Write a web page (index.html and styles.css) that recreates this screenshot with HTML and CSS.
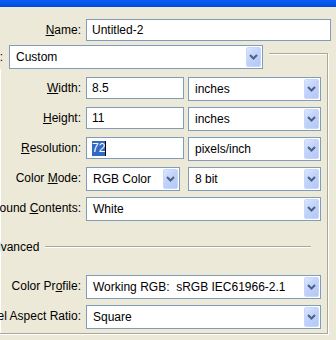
FILE: index.html
```html
<!DOCTYPE html>
<html>
<head>
<meta charset="utf-8">
<link rel="stylesheet" href="styles.css">
</head>
<body>
<div class="titlebar"></div>

<div class="row name-row">
  <div class="label"><span><u>N</u>ame:</span></div>
  <div class="text grow">Untitled-2</div>
</div>

<div class="group">
  <div class="legend">
    <div class="label legend-label"><span>Pr<u>e</u>set:</span></div>
    <div class="select preset"><span class="val">Custom</span><span class="btn"><svg width="9" height="6" viewBox="0 0 9 6"><path d="M1 1L4.5 4.5L8 1" fill="none" stroke="#4d6185" stroke-width="2"/></svg></span></div>
  </div>

  <div class="row first">
    <div class="label"><span><u>W</u>idth:</span></div>
    <div class="text num">8.5</div>
    <div class="select unit"><span class="val">inches</span><span class="btn"><svg width="9" height="6" viewBox="0 0 9 6"><path d="M1 1L4.5 4.5L8 1" fill="none" stroke="#4d6185" stroke-width="2"/></svg></span></div>
  </div>

  <div class="row">
    <div class="label"><span><u>H</u>eight:</span></div>
    <div class="text num">11</div>
    <div class="select unit"><span class="val">inches</span><span class="btn"><svg width="9" height="6" viewBox="0 0 9 6"><path d="M1 1L4.5 4.5L8 1" fill="none" stroke="#4d6185" stroke-width="2"/></svg></span></div>
  </div>

  <div class="row">
    <div class="label"><span><u>R</u>esolution:</span></div>
    <div class="text num"><span class="sel">72</span><span class="caret"></span></div>
    <div class="select unit"><span class="val">pixels/inch</span><span class="btn"><svg width="9" height="6" viewBox="0 0 9 6"><path d="M1 1L4.5 4.5L8 1" fill="none" stroke="#4d6185" stroke-width="2"/></svg></span></div>
  </div>

  <div class="row">
    <div class="label"><span>Color <u>M</u>ode:</span></div>
    <div class="select mode"><span class="val">RGB Color</span><span class="btn"><svg width="9" height="6" viewBox="0 0 9 6"><path d="M1 1L4.5 4.5L8 1" fill="none" stroke="#4d6185" stroke-width="2"/></svg></span></div>
    <div class="select unit"><span class="val">8 bit</span><span class="btn"><svg width="9" height="6" viewBox="0 0 9 6"><path d="M1 1L4.5 4.5L8 1" fill="none" stroke="#4d6185" stroke-width="2"/></svg></span></div>
  </div>

  <div class="row">
    <div class="label"><span>Background <u>C</u>ontents:</span></div>
    <div class="select full"><span class="val">White</span><span class="btn"><svg width="9" height="6" viewBox="0 0 9 6"><path d="M1 1L4.5 4.5L8 1" fill="none" stroke="#4d6185" stroke-width="2"/></svg></span></div>
  </div>

  <div class="advanced">
    <span class="adv-text">Advanced</span>
    <span class="adv-line"></span>
  </div>

  <div class="row profile">
    <div class="label"><span>Color Pr<u>o</u>file:</span></div>
    <div class="select full"><span class="val">Working RGB:&nbsp; sRGB IEC61966-2.1</span><span class="btn"><svg width="9" height="6" viewBox="0 0 9 6"><path d="M1 1L4.5 4.5L8 1" fill="none" stroke="#4d6185" stroke-width="2"/></svg></span></div>
  </div>

  <div class="row">
    <div class="label"><span>Pixel Aspect Ratio:</span></div>
    <div class="select full"><span class="val">Square</span><span class="btn"><svg width="9" height="6" viewBox="0 0 9 6"><path d="M1 1L4.5 4.5L8 1" fill="none" stroke="#4d6185" stroke-width="2"/></svg></span></div>
  </div>
</div>
</body>
</html>
```

FILE: styles.css
```css
html, body {
  margin: 0;
  padding: 0;
}

body {
  width: 336px;
  height: 340px;
  overflow: hidden;
  background: #ece9d8;
  font-family: "Liberation Sans", Arial, sans-serif;
  font-size: 12px;
  color: #000;
}

.titlebar {
  height: 7px;
  background: linear-gradient(180deg, #0a5cf0 0%, #0553e6 70%, #0247d6 100%);
}

.row {
  display: flex;
  align-items: flex-start;
  height: 24px;
  margin-top: 6px;
}

.name-row {
  margin-top: 12px;
  height: 22px;
}

.label {
  width: 81px;
  flex: none;
  height: 22px;
  display: flex;
  justify-content: flex-end;
  align-items: center;
  white-space: nowrap;
  margin-right: 5px;
}

.text {
  box-sizing: border-box;
  height: 22px;
  border: 1px solid #7f9db9;
  background: #fff;
  display: flex;
  align-items: center;
  padding-left: 5px;
  white-space: nowrap;
}

.grow {
  flex: 1;
  margin-right: 5px;
}

.num {
  width: 98px;
}

.sel {
  background: #316ac5;
  color: #fff;
  line-height: 15px;
}

.caret {
  width: 1px;
  height: 15px;
  background: #000;
}

.select {
  box-sizing: border-box;
  height: 24px;
  border: 1px solid #7f9db9;
  background: #fff;
  padding: 1px;
  display: flex;
  align-items: stretch;
  white-space: nowrap;
}

.val {
  flex: 1;
  display: flex;
  align-items: center;
  padding-left: 5px;
  overflow: hidden;
}

.btn {
  box-sizing: border-box;
  width: 15px;
  flex: none;
  display: flex;
  align-items: center;
  justify-content: center;
  border: 1px solid #c6d6fc;
  border-radius: 2px;
  background: linear-gradient(135deg, #dce6fe 0%, #c1d3fb 45%, #b4c8f7 100%);
}

.unit {
  width: 133px;
  margin-left: auto;
  margin-right: 6px;
}

.mode {
  width: 94px;
}

.full {
  flex: 1;
  margin-right: 6px;
}

.group {
  box-sizing: border-box;
  width: 329px;
  margin-left: -1px;
  margin-top: 12px;
  border: 1px solid #aca899;
  box-shadow: inset 1px 1px 0 #fff, 1px 1px 0 #fff;
  padding-bottom: 4px;
  display: flex;
  flex-direction: column;
}

.legend {
  align-self: flex-start;
  display: flex;
  align-items: center;
  margin-top: -9px;
  padding-right: 6px;
  background: #ece9d8;
}

.legend-label {
  width: 3px;
  margin-right: 6px;
  height: 24px;
}

.preset {
  width: 254px;
}

.row.first {
  margin-top: 8px;
}

.advanced {
  display: flex;
  align-items: center;
  height: 14px;
  margin-top: 19px;
  margin-left: -14px;
}

.adv-text {
  white-space: nowrap;
}

.adv-line {
  flex: 1;
  margin-left: 6px;
  margin-right: 16px;
  border-top: 1px solid #aca899;
  border-bottom: 1px solid #fff;
}

.row.profile {
  margin-top: 21px;
}
```
